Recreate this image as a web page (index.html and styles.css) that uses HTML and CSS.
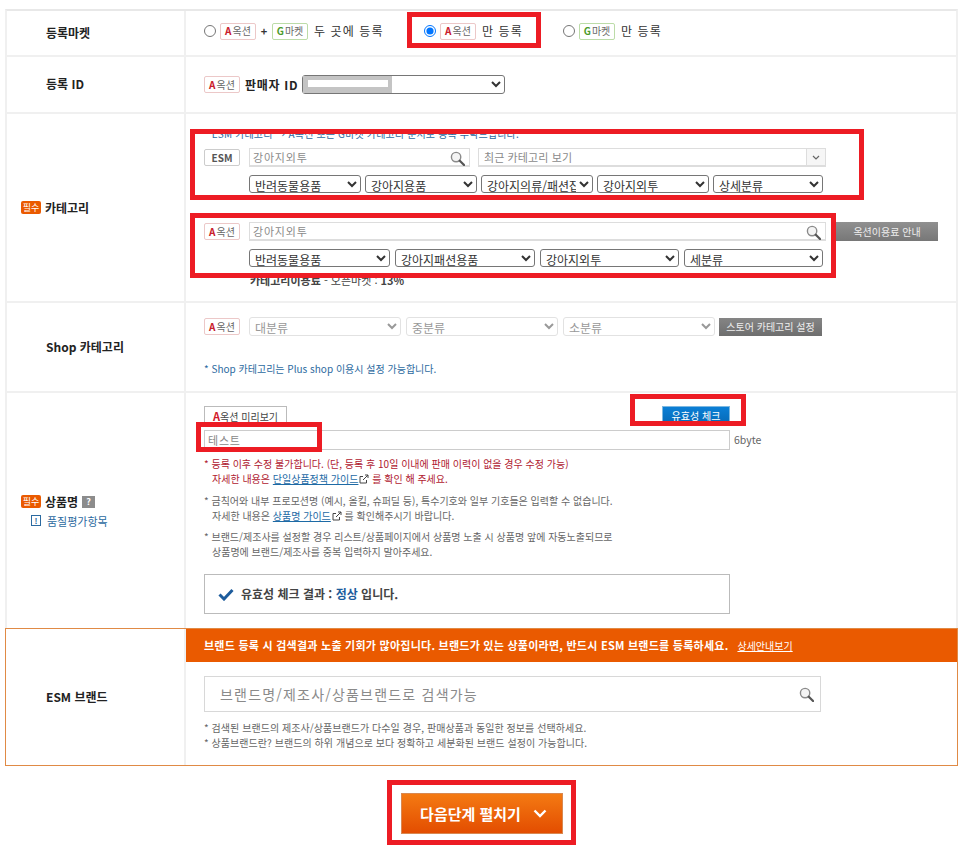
FILE: index.html
```html
<!DOCTYPE html>
<html lang="ko">
<head>
<meta charset="utf-8">
<title>상품 등록</title>
<link rel="stylesheet" href="styles.css">
</head>
<body>
<svg class="defs" width="0" height="0" aria-hidden="true">
  <symbol id="glass" viewBox="0 0 16 16"><circle cx="6.5" cy="6.5" r="5" fill="#f4f4f4" stroke="#8a8a8a" stroke-width="1.5"/><path d="M10.4 10.4 15 15" stroke="#555" stroke-width="2.4" stroke-linecap="round"/></symbol>
  <symbol id="ext" viewBox="0 0 10 10"><path d="M7.5 6v3H1V2.5h3" fill="none" stroke="#444" stroke-width="1"/><path d="M4 6 9 1M6 1h3v3" fill="none" stroke="#444" stroke-width="1"/></symbol>
</svg>

<main class="sheet">
  <section class="row row-market">
    <div class="label">등록마켓</div>
    <div class="body">
      <div class="options">
        <label class="opt opt-both"><input type="radio" name="market"><span class="mk mk-a"><b>A</b>옥션</span><span class="plus">+</span><span class="mk mk-g"><b>G</b>마켓</span><span class="opt-text">두 곳에 등록</span></label>
        <label class="opt opt-a"><input type="radio" name="market" checked><span class="mk mk-a"><b>A</b>옥션</span><span class="opt-text">만 등록</span></label>
        <label class="opt opt-g"><input type="radio" name="market"><span class="mk mk-g"><b>G</b>마켓</span><span class="opt-text">만 등록</span></label>
      </div>
    </div>
  </section>

  <section class="row row-id">
    <div class="label">등록 ID</div>
    <div class="body">
      <div class="id-line">
        <span class="mk mk-a"><b>A</b>옥션</span>
        <strong class="seller">판매자 ID</strong>
        <div class="id-select">
          <select class="sel sel-tall sel-id" aria-label="판매자 ID"><option></option></select>
          <span class="redact"><span class="redact-bar"></span></span>
        </div>
      </div>
    </div>
  </section>

  <section class="row row-cat">
    <div class="label label-req"><span class="req">필수</span>카테고리</div>
    <div class="body">
      <p class="hint">* ESM 카테고리 → A옥션 또는 G마켓 카테고리 분서로 등록 부탁드립니다.</p>
      <div class="cat-line">
        <span class="mk mk-esm">ESM</span>
        <div class="search search-esm"><span class="search-text">강아지외투</span><svg class="glass"><use href="#glass"/></svg></div>
        <div class="search search-recent"><span class="search-text">최근 카테고리 보기</span><span class="recent-caret"><svg width="8" height="5" viewBox="0 0 8 5"><path d="M1 1l3 3 3-3" fill="none" stroke="#666" stroke-width="1.2"/></svg></span></div>
      </div>
      <div class="sel-line">
        <select class="sel w112"><option>반려동물용품</option></select>
        <select class="sel w112"><option>강아지용품</option></select>
        <select class="sel w112"><option>강아지의류/패션잡화</option></select>
        <select class="sel w112"><option>강아지외투</option></select>
        <select class="sel w110"><option>상세분류</option></select>
      </div>
      <div class="cat-line cat-line-a">
        <span class="mk mk-a"><b>A</b>옥션</span>
        <div class="search search-a"><span class="search-text">강아지외투</span><svg class="glass"><use href="#glass"/></svg></div>
        <button class="btn-gray btn-fee" type="button">옥션이용료 안내</button>
      </div>
      <div class="sel-line sel-line-a">
        <select class="sel w141"><option>반려동물용품</option></select>
        <select class="sel w140"><option>강아지패션용품</option></select>
        <select class="sel w139"><option>강아지외투</option></select>
        <select class="sel w139"><option>세분류</option></select>
      </div>
      <p class="fee"><b>카테고리이용료</b> - 오픈마켓 : <b>13%</b></p>
    </div>
  </section>

  <section class="row row-shop">
    <div class="label">Shop 카테고리</div>
    <div class="body">
      <div class="shop-line">
        <span class="mk mk-a"><b>A</b>옥션</span>
        <select class="sel sel-tall w152 shop-first" disabled><option>대분류</option></select>
        <select class="sel sel-tall w152" disabled><option>중분류</option></select>
        <select class="sel sel-tall w152" disabled><option>소분류</option></select>
        <button class="btn-gray btn-store" type="button">스토어 카테고리 설정</button>
      </div>
      <p class="note-blue">* Shop 카테고리는 Plus shop 이용시 설정 가능합니다.</p>
    </div>
  </section>

  <section class="row row-name">
    <div class="label label-name">
      <div class="name-head"><span class="req">필수</span>상품명<span class="help">?</span></div>
      <a class="quality"><span class="quality-ico">!</span>품질평가항목</a>
    </div>
    <div class="body">
      <div class="name-tools">
        <button class="btn-preview" type="button"><b>A</b>옥션 미리보기</button>
        <button class="btn-check" type="button">유효성 체크</button>
      </div>
      <div class="name-input-line">
        <div class="name-input">테스트</div>
        <span class="bytes">6byte</span>
      </div>
      <div class="notes notes-red">
        <p>* 등록 이후 수정 불가합니다. (단, 등록 후 10일 이내에 판매 이력이 없을 경우 수정 가능)</p>
        <p class="indent">자세한 내용은 <a class="guide">단일상품정책 가이드</a><svg class="ext"><use href="#ext"/></svg> 를 확인 해 주세요.</p>
      </div>
      <div class="notes notes-gray">
        <p>* 금칙어와 내부 프로모션명 (예시, 올킬, 슈퍼딜 등), 특수기호와 일부 기호들은 입력할 수 없습니다.</p>
        <p class="indent">자세한 내용은 <a class="guide">상품명 가이드</a><svg class="ext"><use href="#ext"/></svg> 를 확인해주시기 바랍니다.</p>
      </div>
      <div class="notes notes-gray notes-tight">
        <p>* 브랜드/제조사를 설정할 경우 리스트/상품페이지에서 상품명 노출 시 상품명 앞에 자동노출되므로</p>
        <p class="indent">상품명에 브랜드/제조사를 중복 입력하지 말아주세요.</p>
      </div>
      <div class="result">
        <svg class="check" viewBox="0 0 16 13"><path d="M1.5 6.5 6 11l8.5-9" fill="none" stroke="#1d5c9c" stroke-width="3"/></svg>
        <span>유효성 체크 결과 : <em>정상</em> 입니다.</span>
      </div>
    </div>
  </section>

  <section class="row row-brand">
    <div class="label">ESM 브랜드</div>
    <div class="body body-brand">
      <div class="banner">브랜드 등록 시 검색결과 노출 기회가 많아집니다. 브랜드가 있는 상품이라면, 반드시 ESM 브랜드를 등록하세요.<a class="banner-link">상세안내보기</a></div>
      <div class="brand-wrap">
        <div class="brand-input"><span>브랜드명/제조사/상품브랜드로 검색가능</span><svg class="glass"><use href="#glass"/></svg></div>
        <div class="brand-notes">
          <p>* 검색된 브랜드의 제조사/상품브랜드가 다수일 경우, 판매상품과 동일한 정보를 선택하세요.</p>
          <p>* 상품브랜드란? 브랜드의 하위 개념으로 보다 정확하고 세분화된 브랜드 설정이 가능합니다.</p>
        </div>
      </div>
    </div>
  </section>

  <div class="next-wrap">
    <button class="btn-next" type="button">다음단계 펼치기<svg class="next-chev" viewBox="0 0 14 9"><path d="M1.5 1.5 7 7l5.5-5.5" fill="none" stroke="#fff" stroke-width="2.4"/></svg></button>
  </div>
</main>

<div class="mark mark-1"></div>
<div class="mark mark-2"></div>
<div class="mark mark-3"></div>
<div class="mark mark-4"></div>
<div class="mark mark-5"></div>
<div class="mark mark-6"></div>
</body>
</html>
```

FILE: styles.css
```css
* { box-sizing: border-box; }
html, body { margin: 0; padding: 0; background: #fff; }
body {
  position: relative;
  width: 973px;
  height: 855px;
  overflow: hidden;
  font-family: "Noto Sans CJK KR", "Noto Sans", sans-serif;
  font-size: 11px;
  color: #333;
}
p { margin: 0; }
.defs { position: absolute; }

.sheet { margin: 9px 0 0 5px; width: 953px; }

.row {
  display: flex;
  border-left: 2px solid #f0f0f0;
  border-right: 2px solid #f0f0f0;
  border-bottom: 2px solid #f0f0f0;
}
.row-market { height: 48px; border-top: 2px solid #e8e8e8; }
.row-id { height: 57px; }
.row-cat { height: 189px; }
.row-shop { height: 90px; }
.row-name { height: 235px; border-bottom: 0; }
.row-brand { height: 138px; border: 1px solid #e08a45; }

.label {
  flex: none;
  width: 177px;
  padding-left: 39px;
  display: flex;
  align-items: center;
  font-size: 12px;
  font-weight: 700;
  color: #222;
  line-height: 16px;
}
.row-id .label { padding-bottom: 2px; }
.row-brand .label { width: 178px; padding-left: 40px; }
.label-req { padding-left: 14px; }
.label-name {
  padding-left: 14px;
  flex-direction: column;
  justify-content: center;
  align-items: flex-start;
}
.body {
  flex: 1;
  min-width: 0;
  padding-left: 18px;
  border-left: 2px solid #f0f0f0;
}

.req {
  width: 20px;
  height: 13px;
  margin-right: 4px;
  border-radius: 2px;
  background: #ea5a00;
  color: #fff;
  font-size: 9px;
  font-weight: 400;
  line-height: 13px;
  text-align: center;
}
.name-head { display: flex; align-items: center; height: 18px; }
.help {
  width: 13px;
  height: 12px;
  margin-left: 4px;
  background: #8c8c8c;
  color: #fff;
  font-size: 9px;
  line-height: 12px;
  text-align: center;
}
.quality {
  display: flex;
  align-items: center;
  margin: 2px 0 0 10px;
  color: #2c6aa0;
  font-size: 11px;
  font-weight: 400;
  line-height: 16px;
}
.quality-ico {
  width: 10px;
  height: 11px;
  margin-right: 6px;
  border: 1px solid #2c6aa0;
  font-size: 8px;
  font-weight: 700;
  line-height: 9px;
  text-align: center;
}

.mk {
  flex: none;
  display: inline-flex;
  align-items: center;
  justify-content: center;
  width: 36px;
  height: 17px;
  border: 1px solid #ecc8c8;
  border-radius: 2px;
  background: #fff;
  color: #666;
  font-size: 10px;
  line-height: 14px;
}
.mk b { margin-right: 1px; color: #c8202c; font-size: 10px; }
.mk-g { border-color: #bcdca8; }
.mk-g b { color: #4c9a2a; }
.mk-esm {
  border-color: #ccc;
  color: #555;
  font-size: 10px;
  font-weight: 700;
}

.options { display: flex; align-items: center; height: 20px; margin-top: 10px; }
.opt { display: flex; align-items: center; }
.opt input { width: 12px; height: 12px; margin: 0 4px 0 0; }
.opt-both { width: 220px; }
.opt-a { width: 139px; }
.plus { width: 16px; text-align: center; font-weight: 700; font-size: 11px; }
.opt-text { margin-left: 6px; font-size: 12px; letter-spacing: 1.1px; line-height: 16px; color: #333; }

.id-line { display: flex; align-items: center; height: 19px; margin-top: 18px; }
.seller { margin: 0 4px 0 5px; font-size: 12px; color: #222; letter-spacing: .7px; line-height: 16px; }
.id-select { position: relative; width: 203px; height: 19px; }
.sel-id { width: 203px; }
.redact { position: absolute; left: 1px; top: 1px; width: 89px; height: 17px; padding: 4px 5px; background: #c4c4c4; }
.redact-bar { display: block; width: 80px; height: 7px; background: #fff; }

.sel {
  height: 18px;
  padding: 0 0 0 1px;
  border: 1px solid #767676;
  border-radius: 3px;
  background-color: #fff;
  color: #333;
  font-family: "Noto Sans CJK KR", "Noto Sans", sans-serif;
  font-size: 12px;
  line-height: 16px;
}
.sel-tall { height: 19px; }
.sel:disabled { border-color: #e2e2e2; color: #999; opacity: 1; }
.w110 { width: 110px; }
.w112 { width: 112px; }
.w139 { width: 139px; }
.w140 { width: 140px; }
.w141 { width: 141px; }
.w152 { width: 152px; margin-left: 5px; }

.hint {
  margin-top: 13px;
  color: #2c6aa0;
  font-size: 10px;
  line-height: 14px;
  letter-spacing: .15px;
}
.cat-line { display: flex; align-items: center; height: 19px; margin-top: 7px; }
.cat-line-a { margin-top: 29px; }
.search {
  position: relative;
  display: flex;
  align-items: center;
  height: 19px;
  border: 1px solid #ddd;
  border-bottom-width: 2px;
  background: #fff;
  color: #8a8a8a;
  font-size: 11px;
  line-height: 15px;
}
.search-text { padding-left: 3px; letter-spacing: .8px; }
.search-esm { width: 221px; margin-left: 9px; }
.search-recent { width: 348px; margin-left: 8px; }
.search-recent .search-text { padding-left: 5px; letter-spacing: .1px; }
.search-a { width: 577px; margin-left: 9px; }
.glass { position: absolute; right: 4px; top: 2px; width: 15px; height: 15px; }
.recent-caret {
  position: absolute;
  right: 0;
  top: 0;
  bottom: 0;
  width: 19px;
  border-left: 1px solid #ddd;
  background: #f6f6f6;
  display: flex;
  align-items: center;
  justify-content: center;
}
.sel-line { display: flex; gap: 4px; margin: 8px 0 0 45px; }
.sel-line-a { gap: 5px; }
.fee {
  margin: 6px 0 0 46px;
  color: #444;
  font-size: 11px;
  line-height: 14px;
}

.btn-gray {
  flex: none;
  border: 0;
  background: linear-gradient(#909090, #777);
  color: #eee;
  font-family: inherit;
  font-size: 10px;
  line-height: 14px;
  padding: 0;
}
.btn-fee { width: 102px; height: 19px; margin-left: 10px; }
.btn-store { width: 103px; height: 18px; margin-left: 4px; background: linear-gradient(#858585, #6e6e6e); }

.shop-line { display: flex; align-items: center; height: 19px; margin-top: 14px; }
.shop-first { margin-left: 9px; }
.note-blue { margin-top: 26px; color: #2c6aa0; font-size: 10px; line-height: 14px; }

.name-tools { display: flex; justify-content: space-between; width: 526px; height: 20px; margin-top: 13px; }
.btn-preview {
  width: 83px;
  height: 20px;
  padding: 0;
  border: 1px solid #bbb;
  border-bottom: 0;
  background: #fff;
  color: #444;
  font-family: inherit;
  font-size: 10px;
  line-height: 14px;
}
.btn-preview b { color: #d2182a; font-size: 11px; }
.btn-check {
  width: 68px;
  height: 20px;
  padding: 0;
  border: 1px solid #7db8e0;
  background: linear-gradient(#0b7fd6, #0668b4);
  color: #fff;
  font-family: inherit;
  font-size: 10px;
  line-height: 14px;
}
.name-input-line { display: flex; align-items: center; margin-top: 4px; height: 20px; }
.name-input {
  width: 526px;
  height: 20px;
  padding-left: 3px;
  border: 1px solid #ccc;
  color: #888;
  font-size: 11px;
  line-height: 18px;
  letter-spacing: .8px;
}
.bytes { margin-left: 4px; color: #666; font-size: 10.5px; line-height: 14px; }

.notes { font-size: 10px; line-height: 15px; }
.notes-red { margin-top: 6px; color: #b02030; }
.notes-gray { margin-top: 7px; color: #666; }
.notes-tight { margin-top: 6px; }
.indent { padding-left: 8px; }
.guide { color: #1d6aa5; text-decoration: underline; }
.ext { width: 10px; height: 10px; margin-left: 1px; vertical-align: -1px; }

.result {
  display: flex;
  align-items: center;
  width: 526px;
  height: 40px;
  margin-top: 15px;
  padding-left: 13px;
  border: 1px solid #bbb;
  color: #444;
  font-size: 12px;
  font-weight: 700;
  line-height: 16px;
}
.result em { color: #1d5c9c; font-style: normal; }
.check { width: 16px; height: 13px; margin-right: 7px; }

.body-brand { padding-left: 0; }
.banner {
  height: 33px;
  padding-left: 18px;
  background: #ea5a00;
  color: #fff;
  font-size: 11px;
  font-weight: 700;
  letter-spacing: .25px;
  line-height: 32px;
  white-space: nowrap;
}
.banner-link { margin-left: 9px; font-size: 10px; font-weight: 400; letter-spacing: 0; text-decoration: underline; }
.brand-wrap { padding: 14px 0 0 18px; }
.brand-input {
  position: relative;
  width: 617px;
  height: 36px;
  padding-left: 15px;
  border: 1px solid #d8d8d8;
  color: #8a8a8a;
  font-size: 14px;
  line-height: 34px;
  letter-spacing: 1.2px;
}
.brand-input .glass { top: 10px; right: 6px; }
.brand-notes { margin-top: 8px; color: #666; font-size: 10px; line-height: 15px; letter-spacing: .05px; }

.next-wrap { display: flex; justify-content: center; margin-top: 27px; }
.btn-next {
  display: flex;
  align-items: center;
  justify-content: center;
  width: 162px;
  height: 41px;
  padding: 0 0 0 4px;
  border: 1px solid #d98850;
  background: linear-gradient(#f47a13, #e34d00);
  color: #fff;
  font-family: inherit;
  font-size: 15px;
  font-weight: 700;
  line-height: 18px;
}
.next-chev { width: 14px; height: 9px; margin-left: 12px; }

.mark { position: absolute; border: 5px solid #ed1c24; }
.mark-1 { left: 407px; top: 12px; width: 134px; height: 36px; }
.mark-2 { left: 190px; top: 129px; width: 674px; height: 71px; }
.mark-3 { left: 190px; top: 213px; width: 646px; height: 65px; }
.mark-4 { left: 196px; top: 422px; width: 126px; height: 30px; }
.mark-5 { left: 630px; top: 394px; width: 116px; height: 32px; }
.mark-6 { left: 387px; top: 780px; width: 189px; height: 65px; }
```
